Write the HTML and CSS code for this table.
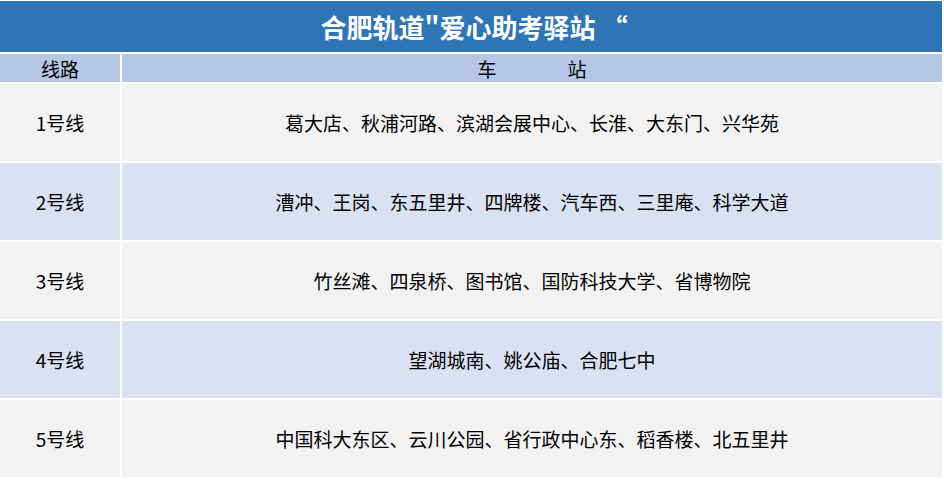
FILE: index.html
```html
<!DOCTYPE html>
<html lang="zh-CN">
<head>
<meta charset="utf-8">
<link rel="stylesheet" href="styles.css">
</head>
<body>
<div class="sheet">
  <div class="title">合肥轨道"爱心助考驿站 “</div>
  <div class="cell head">线路</div>
  <div class="cell head stations-head"><span>车</span><span>站</span></div>

  <div class="cell odd">1号线</div>
  <div class="cell odd">葛大店、秋浦河路、滨湖会展中心、长淮、大东门、兴华苑</div>

  <div class="cell even">2号线</div>
  <div class="cell even">漕冲、王岗、东五里井、四牌楼、汽车西、三里庵、科学大道</div>

  <div class="cell odd">3号线</div>
  <div class="cell odd">竹丝滩、四泉桥、图书馆、国防科技大学、省博物院</div>

  <div class="cell even">4号线</div>
  <div class="cell even">望湖城南、姚公庙、合肥七中</div>

  <div class="cell odd">5号线</div>
  <div class="cell odd">中国科大东区、云川公园、省行政中心东、稻香楼、北五里井</div>
</div>
</body>
</html>
```

FILE: styles.css
```css
html, body {
  margin: 0;
  padding: 0;
  background: #ffffff;
}
body {
  padding-top: 1px;
  font-family: "Noto Sans CJK SC", "Microsoft YaHei", sans-serif;
  color: #000;
}
.sheet {
  width: 942px;
  display: grid;
  grid-template-columns: 120px 820px;
  grid-template-rows: 51px 28px repeat(5, 77px);
  column-gap: 2px;
  row-gap: 2px;
}
.title {
  grid-column: 1 / 3;
  background: #2e75b6;
  color: #fff;
  font-weight: 700;
  font-size: 26px;
  display: flex;
  align-items: center;
  justify-content: center;
  padding-left: 6px;
}
.cell {
  display: flex;
  align-items: center;
  justify-content: center;
  font-size: 19px;
  line-height: 1;
}
.head {
  background: #b4c7e7;
  font-size: 19px;
}
.stations-head {
  gap: 71px;
}
.odd {
  background: #f2f2f2;
}
.even {
  background: #d9e1f2;
}
```
